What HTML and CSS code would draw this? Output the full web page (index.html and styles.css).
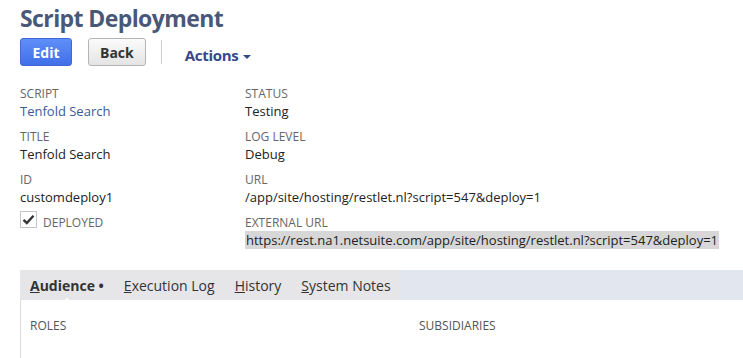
FILE: index.html
```html
<!DOCTYPE html>
<html lang="en">
<head>
  <meta charset="UTF-8">
  <title>Script Deployment</title>
  <link rel="stylesheet" href="styles.css">
</head>
<body>
  <div class="page">
    <h1>Script Deployment</h1>

    <div class="toolbar">
      <button class="btn btn-primary">Edit</button>
      <button class="btn">Back</button>
      <span class="sep"></span>
      <a class="actions" href="#">Actions <span class="caret"></span></a>
    </div>

    <div class="fields">
      <div class="col col-left">
        <div class="field">
          <div class="label">Script</div>
          <div class="value"><a href="#">Tenfold Search</a></div>
        </div>
        <div class="field">
          <div class="label">Title</div>
          <div class="value">Tenfold Search</div>
        </div>
        <div class="field">
          <div class="label">ID</div>
          <div class="value">customdeploy1</div>
        </div>
        <div class="check">
          <span class="box">
            <svg width="13" height="11" viewBox="0 0 13 11"><path d="M1.5 5.8 L4.8 9 L11.5 1.8" fill="none" stroke="#333" stroke-width="2.4"/></svg>
          </span>
          <span class="label">Deployed</span>
        </div>
      </div>
      <div class="col">
        <div class="field">
          <div class="label">Status</div>
          <div class="value">Testing</div>
        </div>
        <div class="field">
          <div class="label">Log Level</div>
          <div class="value">Debug</div>
        </div>
        <div class="field">
          <div class="label">URL</div>
          <div class="value">/app/site/hosting/restlet.nl?script=547&amp;deploy=1</div>
        </div>
        <div class="field">
          <div class="label">External URL</div>
          <div class="value"><span class="selected">https://rest.na1.netsuite.com/app/site/hosting/restlet.nl?script=547&amp;deploy=1</span></div>
        </div>
      </div>
    </div>

    <div class="tabs">
      <div class="tab-list">
        <span class="tab active"><u>A</u>udience &bull;</span>
        <span class="tab"><u>E</u>xecution Log</span>
        <span class="tab"><u>H</u>istory</span>
        <span class="tab"><u>S</u>ystem Notes</span>
      </div>
    </div>
    <div class="tab-panel">
      <div class="panel-col">Roles</div>
      <div class="panel-col">Subsidiaries</div>
    </div>
  </div>
</body>
</html>
```

FILE: styles.css
```css
body {
  margin: 0;
  font-family: 'Open Sans', sans-serif;
  background: white;
  color: #222;
}

.page {
  padding: 0 0 0 20px;
}

h1 {
  margin: 0;
  font-size: 23px;
  line-height: 36px;
  letter-spacing: -0.6px;
  font-weight: bold;
  color: #4a5877;
}

.toolbar {
  display: flex;
  align-items: center;
  margin-top: 2px;
  height: 28px;
}

.btn {
  height: 28px;
  padding: 0 11px;
  font-family: 'Open Sans', sans-serif;
  font-size: 14px;
  font-weight: bold;
  border: 1px solid #b4b4b4;
  border-radius: 3px;
  background: linear-gradient(#fbfbfb, #e4e4e4);
  color: #333;
  margin-right: 15px;
}

.btn-primary {
  width: 52px;
  margin-right: 16px;
  border-color: #3f67d6;
  background: linear-gradient(#5f8ff8, #416fe9);
  color: white;
}

.sep {
  width: 1px;
  height: 24px;
  background: #cfcfcf;
  margin: 0 23px 0 0;
}

.actions {
  font-size: 15px;
  font-weight: bold;
  color: #34488c;
  text-decoration: none;
  margin-top: 6px;
  letter-spacing: -0.3px;
}

.caret {
  display: inline-block;
  width: 0;
  height: 0;
  border-left: 4px solid transparent;
  border-right: 4px solid transparent;
  border-top: 4px solid #34488c;
  vertical-align: middle;
  margin-left: 1px;
}

.fields {
  display: flex;
  margin-top: 19px;
}

.col-left {
  width: 225px;
}

.field {
  margin-bottom: 8px;
}

.label {
  font-size: 12px;
  line-height: 17px;
  text-transform: uppercase;
  color: #666;
}

.value {
  font-size: 13px;
  line-height: 18px;
  color: #222;
}

.value a {
  color: #3b5998;
  text-decoration: none;
}

.selected {
  background: #d7d7d7;
  padding: 0 1px;
  display: inline-block;
}

.check {
  display: flex;
  align-items: flex-start;
  margin-top: -3px;
}

.check .label {
  margin-left: 6px;
  margin-top: 3px;
}

.box {
  width: 15px;
  height: 15px;
  border: 1px solid #c4c4c4;
  display: flex;
  align-items: center;
  justify-content: center;
  background: white;
}

.tabs {
  margin-top: 13px;
  height: 30px;
  background: #e2e6ef;
}

.tab-list {
  display: inline-flex;
  height: 30px;
  align-items: center;
  background: #e6e6e8;
  padding: 0 9px 0 10px;
  gap: 20px;
}

.tab {
  font-size: 14px;
  color: #333;
  position: relative;
}

.tab.active {
  font-weight: bold;
  color: #333;
}

.tab.active::after {
  content: '';
  position: absolute;
  left: 31px;
  bottom: -8px;
  border-left: 6px solid transparent;
  border-right: 6px solid transparent;
  border-bottom: 5px solid white;
}

.tab-panel {
  border-left: 1px solid #dcdcdc;
  display: flex;
  height: 42px;
  padding: 17px 0 0 9px;
}

.panel-col {
  font-size: 12px;
  text-transform: uppercase;
  color: #555;
}

.panel-col:first-child {
  width: 389px;
  flex-shrink: 0;
}
```
